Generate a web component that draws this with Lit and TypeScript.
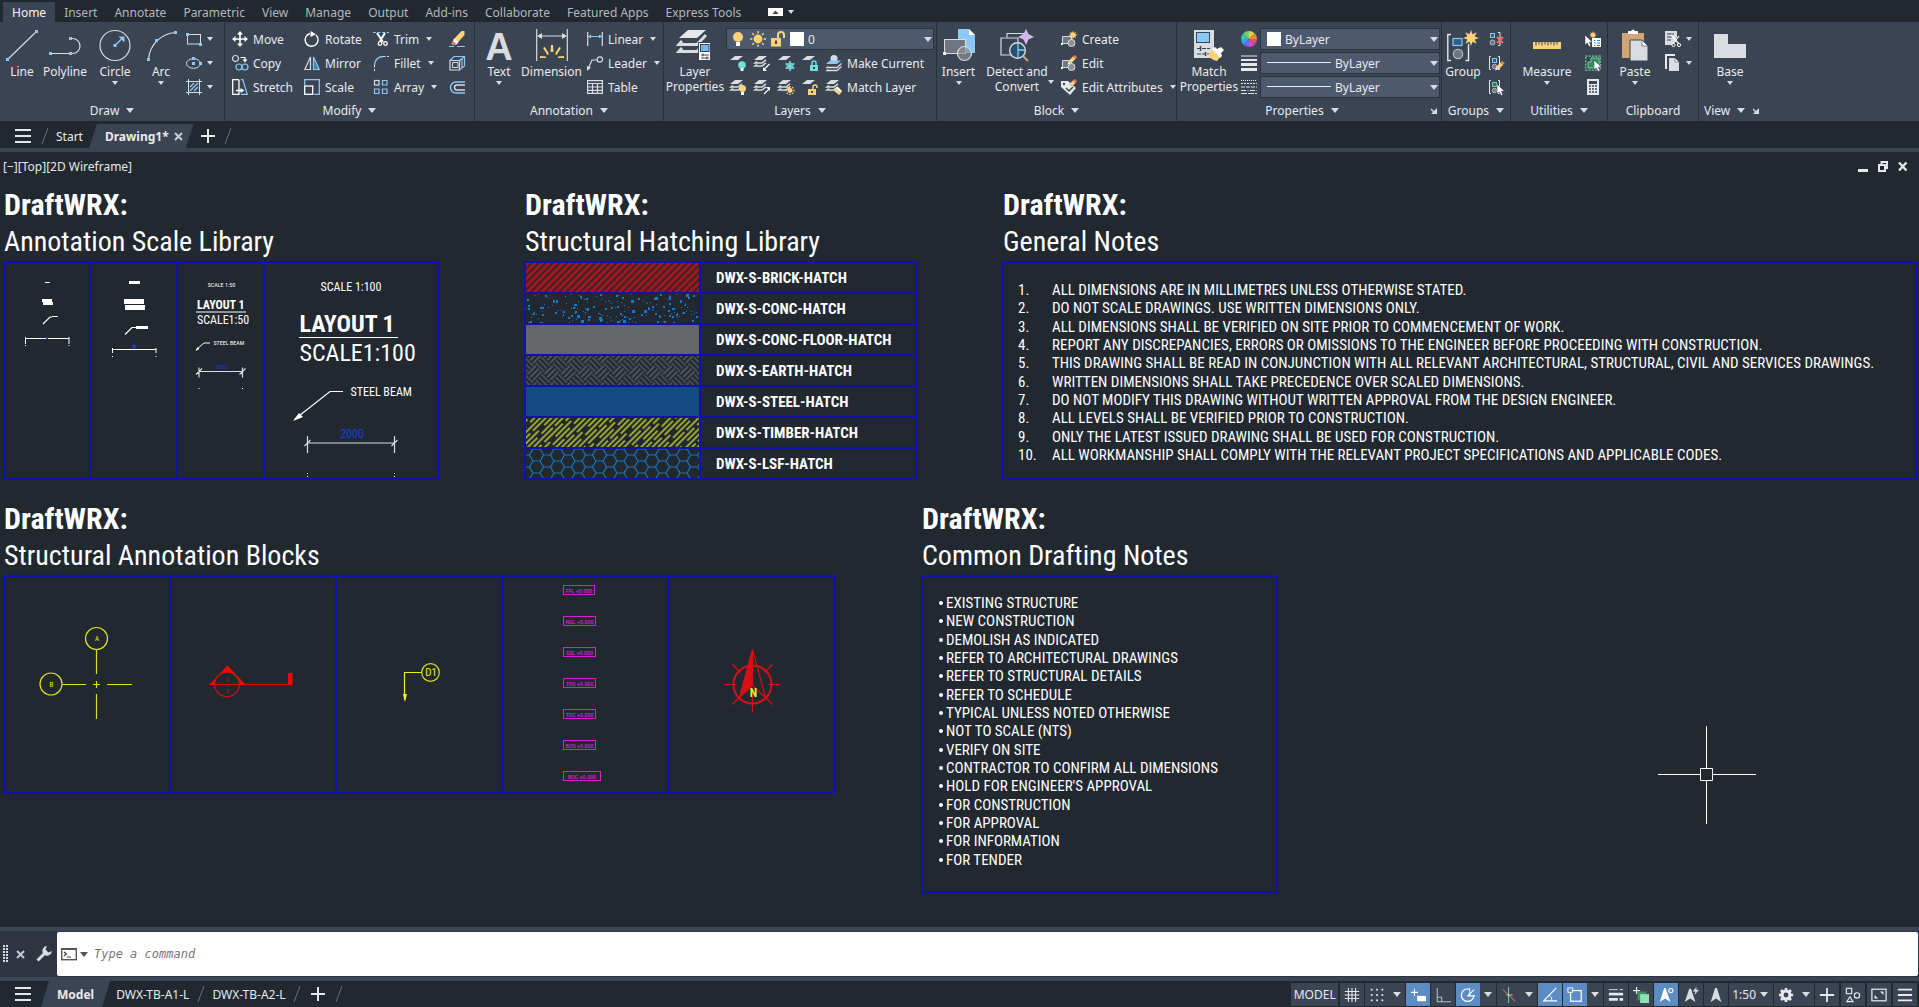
import { LitElement, html, svg, css, nothing, TemplateResult, SVGTemplateResult } from "lit";
import { customElement } from "lit/decorators.js";
import { classMap } from "lit/directives/class-map.js";

type Art = SVGTemplateResult;

const icon = (art: Art, w = 16, h = w, show = w) =>
  html`<svg class="ico" width=${show} height=${show === w ? h : show} viewBox="0 0 ${w} ${h}" aria-hidden="true">${art}</svg>`;

const caret = (wide = false) =>
  wide
    ? html`<svg class="ico" width="8" height="5" viewBox="0 0 8 5" aria-hidden="true"><path d="M0 0h8L4 5z" fill="#d9dce0" /></svg>`
    : html`<svg class="ico" width="6" height="4" viewBox="0 0 6 4" aria-hidden="true"><path d="M0 0h6L3 4z" fill="#d9dce0" /></svg>`;

const dot = (x: number, y: number) => svg`<rect x=${x - 1.5} y=${y - 1.5} width="3" height="3" fill="#8cc8f5" />`;
const cursor = (x: number, y: number) =>
  svg`<path transform="translate(${x} ${y})" d="M0 0v10l2.300-2 1.700 3.500 2-1-1.700-3.300H7.500z" fill="#fff" stroke="#3b4453" stroke-width=".6" />`;
const star = (x: number, y: number, r: number) => {
  const pts: string[] = [];
  for (let i = 0; i < 16; i++) {
    const q = i % 2 ? r * 0.5 : r;
    const a = (i * Math.PI) / 8;
    pts.push(`${(x + q * Math.sin(a)).toFixed(1)},${(y - q * Math.cos(a)).toFixed(1)}`);
  }
  return svg`<polygon points=${pts.join(" ")} fill="#fbd27a" />`;
};
const sun = (x: number, y: number, r: number) => svg`
  <circle cx=${x} cy=${y} r=${r * 0.55} fill="#fbd27a" />
  <g stroke="#fbd27a" stroke-width="1.4">
    ${[0, 45, 90, 135].map((a) => svg`<path d="M${x} ${y - r}V${y - r * 0.7}M${x} ${y + r}V${y + r * 0.7}" transform="rotate(${a} ${x} ${y})" />`)}
  </g>`;
const pencil = (x: number, y: number) => svg`
  <g transform="translate(${x} ${y}) rotate(45)">
    <rect x="-1.800" y="0" width="3.600" height="2.500" fill="#f0706a" />
    <rect x="-1.800" y="2.500" width="3.600" height="6" fill="#fbd27a" />
    <path d="M-1.800 8.500h3.600L0 12z" fill="#e6e8eb" />
  </g>`;
const sheet = (y: number, fill = "#d9dce0") => svg`<path d="M5 ${y}h8l-5 4H0z" fill=${fill} />`;
const sheets = svg`${sheet(1)}<path d="M3 6.500L1 8h7l4-3.200M3 9.500L1 11h7l4-3.200" stroke="#d9dce0" stroke-width="1.500" fill="none" />`;
const lock = (x: number, y: number, fill: string, open: boolean) => svg`
  <rect x=${x} y=${y} width="8" height="6" fill=${fill} />
  <path d=${open ? `M${x + 5} ${y}v-2a2 2 0 0 1 4 0v1` : `M${x + 2} ${y}v-2a2 2 0 0 1 4 0v2`} stroke=${fill} stroke-width="1.500" fill="none" />
  <rect x=${x + 3} y=${y + 2} width="2" height="2" fill="#3b4453" />`;
const blockBase = svg`
  <path d="M1.500 5.500h9v7h-9z" fill="#6f7681" stroke="#d9dce0" />
  <circle cx="10.500" cy="12" r="3.500" fill="#8b9099" stroke="#d9dce0" />
  <rect x="0" y="12" width="2" height="2" fill="#fff" />`;
const groupBits = (stroke: string, fill: string) => svg`
  <path d="M3 1.500H1.500v13H3M10 1.500h1.500v13H10" stroke="#e6e8eb" fill="none" />
  <rect x="4.500" y="3.500" width="4" height="4" stroke=${stroke} fill=${fill} />
  <circle cx="6.500" cy="11.500" r="2.200" stroke="#b8bcc2" fill="#6f7681" />`;

const A: Record<string, Art> = {
  line: svg`<path d="M1.500 30.500l29-28" stroke="#d9dce0" stroke-width="1.200" />${dot(1.5, 30.5)}${dot(30.5, 2.5)}`,
  polyline: svg`<path d="M1.500 24.500h22a7.500 7.500 0 0 0 0-15h-2" stroke="#d9dce0" stroke-width="1.200" fill="none" />${dot(1.5, 24.5)}${dot(21.5, 24.5)}${dot(21.5, 9.5)}`,
  circle: svg`<circle cx="16" cy="16.500" r="15" stroke="#d9dce0" stroke-width="1.200" fill="none" /><path d="M16 16.500l8-8" stroke="#8cc8f5" stroke-width="1.500" /><path d="M25.500 7.500v6l-6-6z" fill="#8cc8f5" />${dot(16, 16.5)}`,
  arc: svg`<path d="M3.500 30.500A29 29 0 0 1 30.500 3.500" stroke="#d9dce0" stroke-width="1.200" fill="none" />${dot(3.5, 30.5)}${dot(11.5, 11.5)}${dot(30.5, 3.5)}`,
  rect: svg`<rect x="1.500" y="3.500" width="13" height="9.500" stroke="#d9dce0" fill="none" /><rect x="0" y="2" width="3" height="3" fill="#8cc8f5" /><rect x="13" y="12" width="3" height="3" fill="#8cc8f5" />`,
  ellipse: svg`<ellipse cx="7.500" cy="8.500" rx="7" ry="4.800" stroke="#d9dce0" fill="none" /><rect x="6" y="7" width="3" height="3" fill="#8cc8f5" /><rect x="6" y="2" width="3" height="3" fill="#8cc8f5" /><rect x="13" y="7" width="3" height="3" fill="#8cc8f5" />`,
  hatch: svg`<path d="M2.500 0v16M13.500 0v16M0 2.500h16M0 13.500h16" stroke="#d9dce0" /><path d="M4 8l4-4M4 12l8-8M8 12l4-4" stroke="#8cc8f5" stroke-width="1.400" />`,
  move: svg`<path d="M8 2v12M2 8h12" stroke="#fff" stroke-width="1.600" /><path d="M8 0l3 3.500H5zM8 16l3-3.500H5zM0 8l3.500-3v6zM16 8l-3.500-3v6z" fill="#fff" />`,
  rotate: svg`<path d="M6 2.500a6.500 6.500 0 1 0 6 1.500" stroke="#fff" stroke-width="1.400" fill="none" /><path d="M6.500 0L12 3.200 6.500 6z" fill="#fff" />`,
  trim: svg`<path d="M0 1.500h16" stroke="#8cc8f5" stroke-dasharray="3 1.500" /><path d="M4 2l6 9M12 2L7 10" stroke="#fff" stroke-width="2" /><circle cx="7" cy="12.500" r="1.800" stroke="#fff" fill="none" stroke-width="1.300" /><circle cx="12.500" cy="12.500" r="1.800" stroke="#fff" fill="none" stroke-width="1.300" />`,
  erase: svg`<path d="M0 15.500h5M8 15.500h8" stroke="#8cc8f5" /><path d="M12.500 0h3v4l-7.500 8.500-4-3.500z" fill="#fbd27a" /><path d="M5.500 7.500l4 3.500-2 2.500q-3 1.500-5-1z" fill="#fff" /><path d="M4 10l3.500 3q-2 2-4.500.5-1-2 1-3.500z" fill="#f0706a" />`,
  copy: svg`<circle cx="3.500" cy="3.500" r="3" stroke="#d9dce0" stroke-width="1.200" fill="none" /><path d="M8.500 2.500h4.500v3" stroke="#fff" stroke-width="1.200" fill="none" /><path d="M10.500 4.500h5L13 7.500z" fill="#fff" /><circle cx="7" cy="12" r="3" stroke="#8cc8f5" stroke-width="1.200" fill="none" /><circle cx="13" cy="12" r="3" stroke="#8cc8f5" stroke-width="1.200" fill="none" />`,
  mirror: svg`<path d="M6.500 2v12.500H.8z" stroke="#d9dce0" stroke-width="1.200" fill="none" /><path d="M9.500 2v12.500h5.700z" fill="#3f7fb0" stroke="#8cc8f5" stroke-width="1.200" />`,
  fillet: svg`<path d="M1.500 10V16M10 1.500h6" stroke="#d9dce0" stroke-dasharray="2.500 1.500" /><path d="M1.500 10A8.500 8.500 0 0 1 10 1.500" stroke="#8cc8f5" stroke-width="1.400" fill="none" />`,
  box: svg`<path d="M1 5.500h9.500V15H1z" stroke="#d9dce0" fill="none" stroke-width="1.200" /><path d="M3.500 7.500H9v5H3.500z" stroke="#d9dce0" fill="none" /><path d="M1 5.500l4-4h10.500v9.500l-5 4M10.500 5.500l5-4M13 4v9" stroke="#8cc8f5" fill="none" stroke-width="1.200" />`,
  stretch: svg`<path d="M7 .7H.7v14.600H7V.7M4 11.500h6" stroke="#fff" stroke-width="1.300" fill="none" /><path d="M8.500 9l4 2.500-4 2.500z" fill="#fff" /><path d="M9 .7h1.800l4.500 14.600H9" stroke="#8cc8f5" stroke-width="1.200" fill="none" />`,
  scale: svg`<path d="M.7 6V.7h14.600v14.600H10" stroke="#8cc8f5" stroke-width="1.300" fill="none" /><rect x=".7" y="7" width="8" height="8.300" stroke="#fff" stroke-width="1.300" fill="none" />`,
  array: svg`<rect x="1.500" y="1.500" width="4.500" height="4.500" stroke="#d9dce0" fill="none" stroke-width="1.200" /><path d="M9.500 1.500H14V6H9.500zM1.500 10H6v4.500H1.500zM9.500 10H14v4.500H9.500z" stroke="#8cc8f5" fill="none" stroke-width="1.200" />`,
  offset: svg`<path d="M16 3H7a5 5 0 0 0 0 11h9" stroke="#8cc8f5" stroke-width="1.400" fill="none" /><path d="M16 6H8a2.500 2.500 0 0 0 0 5h8" stroke="#d9dce0" stroke-width="1.400" fill="none" />`,
  text: svg`<text x="16" y="31" text-anchor="middle" class="glyph">A</text>`,
  dimension: svg`<path d="M.7 0v32M31.300 0v32" stroke="#d9dce0" stroke-width="1.200" /><path d="M3 7h26" stroke="#d9dce0" /><path d="M1 7l5-3v6zM31 7l-5-3v6z" fill="#d9dce0" /><path d="M15 16h2l.5 7h-3zM7 19l2-1 4 7-1.500 1zM25 19l-2-1-4 7 1.500 1zM4 29v-2l6 .5V29zM28 29v-2l-6 .5V29z" fill="#fbd27a" />`,
  linear: svg`<path d="M.7 1v14M15.300 1v14" stroke="#d9dce0" stroke-width="1.200" /><path d="M1 5.500h14" stroke="#8cc8f5" /><path d="M1 5.500l3-2v4zM15 5.500l-3-2v4z" fill="#8cc8f5" />`,
  leader: svg`<path d="M1.500 13L5 5h5" stroke="#d9dce0" stroke-width="1.200" fill="none" /><circle cx="12.800" cy="4.500" r="2.700" stroke="#d9dce0" stroke-width="1.200" fill="none" /><path d="M0 16v-5l4 1.500z" fill="#d9dce0" />`,
  table: svg`<path d="M.6 1.600h14.800v12.800H.6zM.6 4.500h14.800M.6 8h14.800M.6 11.300h14.800M5.500 4.500v10M10.500 4.500v10" stroke="#d9dce0" stroke-width="1.200" fill="none" />`,
  layerProps: svg`<path d="M9 1h18L18 9H0z" fill="#e6e8eb" /><path d="M3 12l-3 3.500h18l9-9.500M3 19l-3 3.500h18l5-5.500" stroke="#d9dce0" stroke-width="3" fill="none" /><rect x="19.500" y="13.500" width="12" height="18" fill="#fff" stroke="#3b4453" /><rect x="21.500" y="15.500" width="8.500" height="7" fill="#6db9f0" stroke="#3b4453" /><path d="M22 26h8M22 29h8M24 24.500v3M28 27.500v3" stroke="#3b4453" />`,
  layOff: svg`${sheet(1)}<circle cx="12" cy="10" r="3.800" fill="#6fe0dc" /><rect x="10.500" y="13" width="3" height="3" fill="#fff" />`,
  layIso: svg`${sheets}<path d="M15.500 9l-5 5" stroke="#fff" stroke-width="1.200" /><path d="M9 16v-4l4 4z" fill="#fff" />`,
  layFreeze: svg`${sheet(1)}<path d="M12 6v10M7.700 8.500l8.600 5M7.700 13.500l8.600-5" stroke="#6fe0dc" stroke-width="1.500" /><circle cx="12" cy="11" r="3" stroke="#6fe0dc" fill="none" />`,
  layLock: svg`${sheet(1)}${lock(8, 10, "#6fe0dc", false)}`,
  makeCurrent: svg`<circle cx="8" cy="3.500" r="3.500" fill="#d9dce0" /><path d="M4 5.500L0 9h11l4-3.500z" fill="#8cc8f5" /><path d="M2 11.500l-1 1h10l4.500-4M2 14.500l-1 1h10l4.500-4" stroke="#d9dce0" stroke-width="1.300" fill="none" />`,
  layOn: svg`${sheets}<circle cx="12.500" cy="9.500" r="3.500" fill="#fbd27a" /><rect x="11" y="13" width="3" height="3" fill="#fff" />`,
  layUniso: svg`${sheets}<path d="M10 15l5-5" stroke="#fff" stroke-width="1.200" /><path d="M16 8v4l-4-4z" fill="#fff" />`,
  layThaw: svg`${sheets}${sun(12, 11.5, 4.5)}`,
  layUnlock: svg`${sheet(1)}${lock(6, 10, "#fbd27a", true)}`,
  matchLayer: svg`${sheets}<path d="M9 9l6 5-2 2-6-5z" fill="#fbd27a" /><path d="M9 9l3-1 4 4-1 2z" fill="#fff" />`,
  bulb: svg`<circle cx="8" cy="6" r="5" fill="#fbd27a" /><rect x="6" y="11" width="4" height="4" fill="#fff" />`,
  sun: sun(8, 8, 8),
  unlock: svg`<rect x="1" y="7" width="10" height="8.500" fill="#fbd27a" /><path d="M8 7V4a3 3 0 0 1 6 0v3" stroke="#fbd27a" stroke-width="2" fill="none" /><rect x="5" y="9.500" width="2" height="3.500" fill="#3b4453" />`,
  insert: svg`<path d="M15 0h11l6 6v18H15z" fill="#8cc8f5" /><path d="M26 0v6h6z" fill="#fff" /><rect x="1.500" y="10.500" width="21" height="14" fill="#6f7681" stroke="#d9dce0" /><circle cx="21.500" cy="24.500" r="7" fill="#8b9099" fill-opacity=".7" stroke="#d9dce0" stroke-width="1.200" /><rect x="0" y="23" width="3" height="3" fill="#fff" />`,
  detect: svg`<path d="M7 8.500V4.500h19v8" stroke="#d9dce0" fill="none" stroke-width="1.200" /><path d="M17 26H1V9h17v6" stroke="#d9dce0" fill="none" stroke-width="1.200" /><path d="M26 0l2.500 5L34 8l-5.500 2.500L26 16l-2.500-5.500L18 8l5.500-3z" fill="#d3b8f0" /><circle cx="17.500" cy="21.500" r="7.800" fill="#25506f" stroke="#d9dce0" stroke-width="1.400" /><path d="M18 14v15M18 21h7" stroke="#8cc8f5" stroke-width="1.300" /><path d="M23 27l5 5" stroke="#c9a477" stroke-width="2" />`,
  create: svg`${blockBase}${star(12, 4, 4.5)}`,
  edit: svg`${blockBase}${pencil(15, 1)}`,
  attrs: svg`<path d="M0 2h7l8 7-6 7-9-8z" fill="#e6e8eb" /><circle cx="3" cy="5" r="1.200" fill="#3b4453" /><path d="M5 9l3 3 4-4" stroke="#3b4453" stroke-width="1.500" fill="none" />${pencil(15, 1)}`,
  matchProps: svg`<rect x="1" y="1" width="20" height="28" fill="#d9dce0" /><rect x="3.500" y="3.500" width="13" height="10" fill="#8cc8f5" stroke="#3b4453" /><path d="M4 19.500h13M4 25h13" stroke="#3b4453" stroke-dasharray="4 1" /><path d="M7.500 17v5M12.500 23v4" stroke="#3b4453" stroke-width="1.500" /><path d="M19 21l9 6-4 5q-6-1-9-6z" fill="#fbd27a" /><path d="M19 20l3-2 2 2 4-2 3 3-3 3 1 3-2 2z" fill="#fff" />`,
  wheel: svg`${["#f7c948", "#f08a3c", "#e8505b", "#c850c0", "#7a5cf0", "#3aa0f0", "#38c8a8", "#7ad070"].map(
    (c, i) => svg`<path d="M8 8L8 0A8 8 0 0 1 13.660 2.340z" fill=${c} transform="rotate(${i * 45} 8 8)" />`
  )}`,
  weights: svg`<path d="M0 1h16" stroke="#e6e8eb" stroke-width="1" /><path d="M0 5h16" stroke="#e6e8eb" stroke-width="2" /><path d="M0 9.500h16" stroke="#e6e8eb" stroke-width="3" /><path d="M0 14.500h16" stroke="#e6e8eb" stroke-width="3" />`,
  types: svg`<path d="M0 1.500h16" stroke="#e6e8eb" stroke-dasharray="1 1" /><path d="M0 4.500h16" stroke="#e6e8eb" stroke-dasharray="2 1" /><path d="M0 8h16" stroke="#e6e8eb" stroke-dasharray="4 1" /><path d="M0 11.500h16" stroke="#e6e8eb" stroke-dasharray="5 1.500 1 1.500" /><path d="M0 14.500h16" stroke="#e6e8eb" stroke-dasharray="6 1" />`,
  group: svg`<path d="M4 5.500H.8v26H4M18 12v19.500h3.500V15M18 5.500h-3" stroke="#e6e8eb" stroke-width="0" fill="none" /><path d="M4 5.500H.8v26H4M18.500 31.500h3V15" stroke="#e6e8eb" stroke-width="1.400" fill="none" /><rect x="6" y="9.500" width="9" height="7" stroke="#8cc8f5" fill="#2f5f88" stroke-width="1.200" /><circle cx="11" cy="25" r="4.700" stroke="#b8bcc2" fill="#6f7681" stroke-width="1.200" />${star(24, 9, 8)}`,
  ungroup: svg`<path d="M10 1.500h2v13h-2" stroke="#e6e8eb" fill="none" /><rect x="2.500" y="2.500" width="4" height="4" stroke="#8cc8f5" fill="#2f5f88" /><circle cx="4.500" cy="11.500" r="2.500" stroke="#b8bcc2" fill="#6f7681" /><path d="M9 6l6 6M15 6l-6 6" stroke="#f0706a" stroke-width="2" />`,
  groupEdit: svg`${groupBits("#8cc8f5", "#2f5f88")}${pencil(15.5, 7)}`,
  groupSel: svg`${groupBits("#6fd09a", "#2b7a50")}${cursor(9, 5)}`,
  measure: svg`<path d="M2 13h28v7H2z" fill="#fbd27a" /><path d="M5 13v3.500M8 13v2.500M11 13v3.500M14 13v2.500M17 13v3.500M20 13v2.500M23 13v3.500M26 13v2.500" stroke="#3b4453" />`,
  quickSel: svg`${star(8, 4, 4)}${cursor(0, 4)}<rect x="7" y="7" width="9" height="9" fill="#fff" /><path d="M9 9.500h1.500M9 12h1.500M9 14.500h1.500M12 9.500h3M12 12h3M12 14.500h3" stroke="#3f7fb0" />`,
  selSimilar: svg`<rect x=".7" y="1.200" width="14.600" height="14" stroke="#6fd09a" fill="none" stroke-dasharray="2 1.200" stroke-width="1.200" /><path d="M6 3h8v7H9v3H3V7h3z" fill="#2f8f62" stroke="#6fd09a" />${cursor(9, 5)}`,
  calc: svg`<rect x="2" y="0" width="12" height="16" fill="#e6e8eb" /><rect x="4" y="2" width="8" height="3" fill="#3b4453" />${[7, 10, 13].map((y) => svg`<path d="M4 ${y}h2M7 ${y}h2M10 ${y}h2" stroke="#3b4453" stroke-width="1.600" />`)}`,
  paste: svg`<path d="M3 4h22v25H3z" fill="#d4a574" /><path d="M9 5V2h3q2-3 4 0h3v3z" fill="#fff" /><path d="M11 11h12l6 6v15H11z" fill="#d9dce0" stroke="#3b4453" /><path d="M23 11v6h6z" fill="#fff" stroke="#3b4453" stroke-width=".6" />`,
  cut: svg`<path d="M0 0h12v6l-4 8H0z" fill="#d9dce0" /><path d="M2 3h7M2 6h5M2 9h4" stroke="#3b4453" /><path d="M6 4l8 9M14 5l-6 8" stroke="#fff" stroke-width="1.200" /><circle cx="8.500" cy="14" r="1.600" stroke="#fff" fill="#3b4453" /><circle cx="14" cy="14" r="1.600" stroke="#fff" fill="#3b4453" />`,
  copyClip: svg`<path d="M1 14V0h9" stroke="#e6e8eb" stroke-width="2" fill="none" /><path d="M4 3h6l4 4v9H4z" fill="#d9dce0" /><path d="M10 3v4h4z" fill="#fff" stroke="#3b4453" stroke-width=".5" />`,
  base: svg`<path d="M0 5h14v10h18v14H0z" fill="#d9dce0" />`,
  menu: svg`<path d="M0 2h16M0 8h16M0 14h16" stroke="#e6e8eb" stroke-width="2" />`,
  plus: svg`<path d="M7 0v14M0 7h14" stroke="#e6e8eb" stroke-width="2" />`,
  cross: svg`<path d="M1 1l7 7M8 1L1 8" stroke="#c8ccd2" stroke-width="2" />`,
  slash: svg`<path d="M1 16L7 0" stroke="#6a717c" />`,
  launch: svg`<path d="M0 1l4 4" stroke="#d9dce0" stroke-width="1.200" /><path d="M6 0v6H0z" fill="#d9dce0" />`,
  console: svg`<rect x=".7" y="1.700" width="14.600" height="11" fill="#fff" stroke="#555" stroke-width="1.400" /><path d="M0 2h16" stroke="#555" stroke-width="2" /><path d="M3 5l2.500 2L3 9M6 10h4" stroke="#333" stroke-width="1.200" fill="none" />`,
  wrench: svg`<path d="M1.500 14.500L9 7" stroke="#d9dce0" stroke-width="3" /><path d="M11 0L9.500 3.500l3 3L16 5a5 5 0 0 1-6.500 4.500L6.500 6.500A5 5 0 0 1 11 0z" fill="#d9dce0" />`,
};

/* Status bar glyphs, 18 x 18 */
const S: Record<string, Art> = {
  grid: svg`<path d="M5 1v16M9 1v16M13 1v16M1 5h16M1 9h16M1 13h16" stroke="#e6e8eb" stroke-width="1.200" />`,
  snap: svg`${[3, 9, 15].map((y) => [3, 9, 15].map((x) => svg`<rect x=${x - 1} y=${y - 1} width="2" height="2" fill="#e6e8eb" />`))}`,
  dyn: svg`<path d="M5 2v8M1 6h8" stroke="#fff" stroke-width="1.300" /><rect x="8" y="10" width="10" height="6" fill="#fff" />`,
  ortho: svg`<path d="M2.500 1v15.500H18M2.500 11.500h5v5" stroke="#b8bcc2" stroke-width="1.200" fill="none" />`,
  polar: svg`<path d="M15.500 10a7 7 0 1 1-5-7.500M8.500 10L16 3M8.500 10H17" stroke="#fff" stroke-width="1.300" fill="none" /><path d="M11 1v9" stroke="#fff" />`,
  iso: svg`<path d="M2 3l14 13" stroke="#e0565b" stroke-width="1.300" /><path d="M8.500 0v18" stroke="#6fd09a" stroke-width="1.200" /><path d="M6 9h7" stroke="#d9dce0" />`,
  track: svg`<path d="M16 1L2 15.500h15" stroke="#fff" stroke-width="1.400" fill="none" /><path d="M8 9a6 6 0 0 1 3 6" stroke="#fff" fill="none" />`,
  osnap: svg`<rect x="4" y="4" width="12" height="12" stroke="#fff" stroke-width="1.400" fill="none" /><rect x="1" y="1" width="5" height="5" stroke="#fff" fill="#5b8cc4" />`,
  weight: svg`<path d="M1 3h10M13 3h4" stroke="#e6e8eb" /><path d="M1 8h16" stroke="#e6e8eb" stroke-width="3" /><path d="M1 14h10M13 14h4" stroke="#e6e8eb" stroke-width="3" />`,
  transp: svg`<path d="M4 0v8M0 4h8" stroke="#e6e8eb" stroke-width="1.300" /><path d="M5 5h10v10H5z" fill="#3c9068" /><path d="M8 8h10v10H8z" fill="#8fe0b4" />`,
  annoA: svg`<path d="M7 1l1.500 0L14 17l-6-4-6 4z" fill="#fff" /><circle cx="14.500" cy="4" r="2.300" stroke="#fff" fill="none" stroke-width="1.200" />`,
  annoB: svg`<path d="M7 2h2l5 15-6-4-6 4z" fill="#d9dce0" /><path d="M15 0l-4 5h3l-1 4 5-6h-3z" fill="#d9dce0" />`,
  annoC: svg`<path d="M8 1h2l5 16-6-4-6 4z" fill="#d9dce0" />`,
  gear: svg`<circle cx="9" cy="9" r="4.500" stroke="#e6e8eb" stroke-width="3.500" fill="none" />${[0, 45, 90, 135].map((a) => svg`<path d="M9 1v3M9 14v3" stroke="#e6e8eb" stroke-width="3" transform="rotate(${a} 9 9)" />`)}`,
  plus: svg`<path d="M9 1v16M1 9h16" stroke="#e6e8eb" stroke-width="2" />`,
  shapes: svg`<rect x="1.500" y="1.500" width="6" height="6" stroke="#e6e8eb" fill="none" stroke-width="1.300" /><circle cx="13.500" cy="9.500" r="3" stroke="#e6e8eb" fill="none" stroke-width="1.300" /><path d="M5.500 11l3.500 5.500H2z" stroke="#e6e8eb" fill="none" stroke-width="1.300" />`,
  expand: svg`<rect x="1" y="2.500" width="16" height="13" stroke="#e6e8eb" fill="none" stroke-width="1.400" /><path d="M14 5v4l-4-4zM4 13V9l4 4z" fill="#e6e8eb" />`,
  menu: svg`<path d="M1 3h16M1 9h16M1 15h16" stroke="#e6e8eb" stroke-width="2" />`,
};

const big = (name: string, label: string[], drop = false, size = 32, side = false) => html`
  <button class=${classMap({ big: true, side })}>
    ${icon(A[name], size, 33)}
    <span>${label.map((l, i) => (i ? html`<br />${l}` : l))}</span>
    ${drop ? caret() : nothing}
  </button>`;

const small = (name: string, label = "", drop = false, title = label) => html`
  <button class="small" aria-label=${title || name}>
    ${icon(A[name])}${label ? html`<span>${label}</span>` : nothing}${drop ? html`<i class="drop">${caret()}</i>` : nothing}
  </button>`;

const panel = (cls: string, title: string, body: TemplateResult, opts: { arrow?: boolean; launch?: boolean } = { arrow: true }) => html`
  <section class="panel ${cls}">
    <div class="body">${body}</div>
    <footer>
      <button class="ptitle">${title}${opts.arrow ? caret(true) : nothing}</button>
      ${opts.launch ? html`<button class="launch" aria-label="${title} settings">${icon(A.launch, 6)}</button>` : nothing}
    </footer>
  </section>`;

const TABS = ["Home", "Insert", "Annotate", "Parametric", "View", "Manage", "Output", "Add-ins", "Collaborate", "Featured Apps", "Express Tools"];

@customElement("cad-ribbon")
class CadRibbon extends LitElement {
  static styles = css`
    :host { display: block; color: #e9ebee; font: 12px/15px "Noto Sans", "Open Sans", sans-serif; }
    button, select { font: inherit; color: inherit; background: none; border: 0; padding: 0; margin: 0; }
    .ico { display: block; flex: none; overflow: visible; }
    .tabs { display: flex; height: 22px; background: #212830; padding: 2px 0 0 3px; box-sizing: border-box; }
    .tabs button { padding: 0 8px; color: #b4b8be; margin-right: 1px; }
    .tabs .on { background: #3b4453; color: #f2f3f5; padding: 0 9px; }
    .tabs .min { display: flex; align-items: center; gap: 5px; padding: 0 18px; }
    .ribbon { display: flex; height: 99px; background: #3b4453; }
    .panel { display: flex; flex-direction: column; box-sizing: border-box; border-right: 1px solid #29303b; flex: none; }
    .body { display: flex; height: 72px; padding-top: 5px; }
    footer { display: flex; justify-content: center; align-items: center; height: 22px; padding-top: 1px; box-sizing: border-box; }
    .ptitle { display: flex; align-items: center; gap: 7px; margin: 0 auto; }
    .launch { padding: 4px; }
    .big { display: flex; flex-direction: column; align-items: center; flex: none; height: 72px; padding-top: 2px; gap: 2px; }
    .big span { white-space: nowrap; text-align: center; }
    .side { position: relative; }
    .side > .ico:last-child { position: absolute; right: 0; top: 53px; }
    .small { display: flex; align-items: center; gap: 5px; height: 24px; white-space: nowrap; }
    .drop { display: block; padding-left: 2px; }
    .col { display: flex; flex-direction: column; align-items: flex-start; }
    .glyph { font: bold 38px "Liberation Sans", sans-serif; fill: #d9dce0; }
    .draw { width: 225px; }
    .draw .big:nth-child(1) { width: 44px; } .draw .big:nth-child(2) { width: 42px; }
    .draw .big:nth-child(3) { width: 58px; } .draw .big:nth-child(4) { width: 34px; }
    .draw .col { padding-left: 8px; }
    .draw .drop { padding-left: 0; }
    .modify { width: 250px; }
    .grid { display: grid; grid-template-columns: 72px 69px 76px 18px; grid-auto-rows: 24px; padding-left: 7px; }
    .anno { width: 189px; }
    .anno .big { width: 57px; } .anno .big:first-child { width: 48px; } .anno .col { padding-left: 7px; }
    .layers { width: 273px; } .layers .big { width: 62px; }
    .layers .stack { display: flex; flex-direction: column; }
    .lrow { display: flex; gap: 8px; padding-left: 4px; }
    .combo { display: flex; align-items: center; gap: 4px; height: 22px; margin: 1px 0; padding: 0 5px; background: #4d596d; border: 1px solid #2c3440; box-sizing: border-box; }
    .combo select { appearance: none; flex: 1; min-width: 0; outline: none; }
    .layers .combo { width: 208px; padding: 0 1px 0 3px; }
    .swatch { width: 14px; height: 14px; background: #fff; }
    .block { width: 240px; }
    .block .big { width: 43px; } .block .side { width: 74px; } .block .col { padding-left: 7px; }
    .props { width: 265px; } .props .big { width: 64px; }
    .props .combo { width: 180px; padding: 0 1px 0 6px; }
    .props .row { display: flex; align-items: center; gap: 3px; height: 24px; }
    .groups { width: 69px; } .groups .big { width: 42px; } .groups .col { padding-left: 4px; }
    .utils { width: 97px; } .utils .big { width: 72px; } .utils .col { padding-left: 2px; }
    .clip { width: 91px; } .clip .big { width: 54px; } .clip .col { padding-left: 3px; }
    .clip .drop { padding-left: 0; }
    .view { flex: 1; border-right: 0; } .view .big { width: 62px; }
    .view footer { justify-content: flex-start; padding-left: 5px; gap: 4px; }
    .view .ptitle { margin: 0; }
  `;

  private prop(art: string, label: string, swatch: boolean) {
    return html`<div class="row">
      ${icon(A[art])}
      <div class="combo">
        ${swatch ? html`<span class="swatch"></span>` : html`<svg class="ico" width="64" height="2" viewBox="0 0 64 2" aria-hidden="true"><path d="M0 .5h64" stroke="#e9ebee" /></svg>`}
        <select aria-label=${label}><option>ByLayer</option></select>${caret(true)}
      </div>
    </div>`;
  }

  render() {
    return html`
      <nav class="tabs">
        ${TABS.map((t, i) => html`<button class=${i ? "" : "on"}>${t}</button>`)}
        <button class="min" aria-label="Minimize ribbon">
          <svg class="ico" width="15" height="8" viewBox="0 0 15 8" aria-hidden="true"><path d="M0 0h15v8H0z" fill="#fff" /><path d="M7.500 2.500L10.500 6h-6z" fill="#444" /></svg>${caret()}
        </button>
      </nav>
      <div class="ribbon">
        ${panel("draw", "Draw", html`
          ${big("line", ["Line"])}${big("polyline", ["Polyline"])}${big("circle", ["Circle"], true)}${big("arc", ["Arc"], true)}
          <div class="col">${small("rect", "", true)}${small("ellipse", "", true)}${small("hatch", "", true)}</div>`)}
        ${panel("modify", "Modify", html`<div class="grid">
          ${small("move", "Move")}${small("rotate", "Rotate")}${small("trim", "Trim", true)}${small("erase")}
          ${small("copy", "Copy")}${small("mirror", "Mirror")}${small("fillet", "Fillet", true)}${small("box")}
          ${small("stretch", "Stretch")}${small("scale", "Scale")}${small("array", "Array", true)}${small("offset")}
        </div>`)}
        ${panel("anno", "Annotation", html`
          ${big("text", ["Text"], true)}${big("dimension", ["Dimension"])}
          <div class="col">${small("linear", "Linear", true)}${small("leader", "Leader", true)}${small("table", "Table")}</div>`)}
        ${panel("layers", "Layers", html`
          ${big("layerProps", ["Layer", "Properties"])}
          <div class="stack">
            <div class="combo">
              ${icon(A.bulb)}${icon(A.sun)}${icon(A.unlock)}<span class="swatch"></span>
              <select aria-label="Layer"><option>0</option></select>${caret(true)}
            </div>
            <div class="lrow">${small("layOff")}${small("layIso")}${small("layFreeze")}${small("layLock")}${small("makeCurrent", "Make Current")}</div>
            <div class="lrow">${small("layOn")}${small("layUniso")}${small("layThaw")}${small("layUnlock")}${small("matchLayer", "Match Layer")}</div>
          </div>`)}
        ${panel("block", "Block", html`
          ${big("insert", ["Insert"], true)}${big("detect", ["Detect and", "Convert"], true, 34, true)}
          <div class="col">${small("create", "Create")}${small("edit", "Edit")}${small("attrs", "Edit Attributes", true)}</div>`)}
        ${panel("props", "Properties", html`
          ${big("matchProps", ["Match", "Properties"])}
          <div class="col">${this.prop("wheel", "Object color", true)}${this.prop("weights", "Lineweight", false)}${this.prop("types", "Linetype", false)}</div>`,
          { arrow: true, launch: true })}
        ${panel("groups", "Groups", html`
          ${big("group", ["Group"])}
          <div class="col">${small("ungroup")}${small("groupEdit")}${small("groupSel")}</div>`)}
        ${panel("utils", "Utilities", html`
          ${big("measure", ["Measure"], true)}
          <div class="col">${small("quickSel")}${small("selSimilar")}${small("calc")}</div>`)}
        ${panel("clip", "Clipboard", html`
          ${big("paste", ["Paste"], true)}
          <div class="col">${small("cut", "", true)}${small("copyClip", "", true)}</div>`, {})}
        ${panel("view", "View", html`${big("base", ["Base"], true)}`, { arrow: true, launch: true })}
      </div>`;
  }
}

const barStyles = css`
  :host { display: block; color: #e9ebee; font: 12px/15px "Noto Sans", "Open Sans", sans-serif; }
  button { display: flex; align-items: center; font: inherit; color: inherit; background: none; border: 0; padding: 0; margin: 0; white-space: nowrap; }
  .ico { display: block; flex: none; }
  .bar { display: flex; align-items: stretch; background: #212830; }
  .menu { width: 41px; padding-left: 15px; }
  .active { background: #3b4453; font-weight: bold; clip-path: polygon(8px 0, 100% 0, calc(100% - 8px) 100%, 0 100%); }
`;

@customElement("cad-file-tabs")
class CadFileTabs extends LitElement {
  static styles = [barStyles, css`
    .bar { height: 31px; border-bottom: 4px solid #3b4453; box-sizing: border-box; padding-top: 3px; }
    .start { padding: 0 6px 0 7px; }
    .active { display: flex; align-items: center; gap: 5px; padding: 0 11px 0 16px; }
    .add { padding: 0 9px 0 7px; }
    .sep { display: flex; align-items: center; }
  `];
  render() {
    return html`<nav class="bar">
      <button class="menu" aria-label="Menu">${icon(A.menu)}</button>
      <span class="sep">${icon(A.slash, 8, 16)}</span>
      <button class="start">Start</button>
      <span class="active"><button>Drawing1*</button><button aria-label="Close">${icon(A.cross, 9)}</button></span>
      <button class="add" aria-label="New drawing">${icon(A.plus, 14)}</button>
      <span class="sep">${icon(A.slash, 8, 16)}</span>
    </nav>`;
  }
}

const GENERAL = [
  "ALL DIMENSIONS ARE IN MILLIMETRES UNLESS OTHERWISE STATED.",
  "DO NOT SCALE DRAWINGS. USE WRITTEN DIMENSIONS ONLY.",
  "ALL DIMENSIONS SHALL BE VERIFIED ON SITE PRIOR TO COMMENCEMENT OF WORK.",
  "REPORT ANY DISCREPANCIES, ERRORS OR OMISSIONS TO THE ENGINEER BEFORE PROCEEDING WITH CONSTRUCTION.",
  "THIS DRAWING SHALL BE READ IN CONJUNCTION WITH ALL RELEVANT ARCHITECTURAL, STRUCTURAL, CIVIL AND SERVICES DRAWINGS.",
  "WRITTEN DIMENSIONS SHALL TAKE PRECEDENCE OVER SCALED DIMENSIONS.",
  "DO NOT MODIFY THIS DRAWING WITHOUT WRITTEN APPROVAL FROM THE DESIGN ENGINEER.",
  "ALL LEVELS SHALL BE VERIFIED PRIOR TO CONSTRUCTION.",
  "ONLY THE LATEST ISSUED DRAWING SHALL BE USED FOR CONSTRUCTION.",
  "ALL WORKMANSHIP SHALL COMPLY WITH THE RELEVANT PROJECT SPECIFICATIONS AND APPLICABLE CODES.",
];
const COMMON = [
  "EXISTING STRUCTURE", "NEW CONSTRUCTION", "DEMOLISH AS INDICATED", "REFER TO ARCHITECTURAL DRAWINGS",
  "REFER TO STRUCTURAL DETAILS", "REFER TO SCHEDULE", "TYPICAL UNLESS NOTED OTHERWISE", "NOT TO SCALE (NTS)",
  "VERIFY ON SITE", "CONTRACTOR TO CONFIRM ALL DIMENSIONS", "HOLD FOR ENGINEER'S APPROVAL", "FOR CONSTRUCTION",
  "FOR APPROVAL", "FOR INFORMATION", "FOR TENDER",
];
const LEVELS = ["FFL +0.000", "NGL +0.000", "SSL +0.000", "TOS +0.000", "TOC +0.000", "BOS +0.000", "BOC +0.000"];

/* Repeatable scatter for the concrete hatch */
const speckle = () => {
  let seed = 11;
  const rnd = () => (seed = (seed * 16807) % 2147483647) / 2147483647;
  const out: Art[] = [];
  for (let i = 0; i < 190; i++) {
    const size = rnd() > 0.9 ? 3 : rnd() > 0.6 ? 2 : 1;
    out.push(svg`<rect x=${Math.floor(rnd() * 172)} y=${Math.floor(rnd() * 29)} width=${size} height=${size} fill="#1878d0" />`);
  }
  return out;
};

const fillWith = (id: string, w: number, h: number, art: Art, transform = "") => svg`
  <defs><pattern id=${id} width=${w} height=${h} patternUnits="userSpaceOnUse" patternTransform=${transform}>${art}</pattern></defs>
  <rect width="100%" height="100%" fill="url(#${id})" />`;

const HATCHES: [string, Art | Art[]][] = [
  ["DWX-S-BRICK-HATCH", fillWith("brick", 5, 5, svg`<path d="M1.500 0v5" stroke="#b51418" stroke-width="2.600" /><path d="M4.200 0v5" stroke="#7a1a20" stroke-width=".5" />`, "rotate(45)")],
  ["DWX-S-CONC-HATCH", speckle()],
  ["DWX-S-CONC-FLOOR-HATCH", svg`<rect width="100%" height="100%" fill="#646669" />`],
  ["DWX-S-EARTH-HATCH", fillWith("earth", 24, 24, svg`<path d="M0 2h12M0 6h12M0 10h12M12 14h12M12 18h12M12 22h12M14 0v12M18 0v12M22 0v12M2 12v12M6 12v12M10 12v12" stroke="#6c7076" stroke-width="1.200" />`, "rotate(45)")],
  ["DWX-S-STEEL-HATCH", svg`<rect width="100%" height="100%" fill="#144b82" />`],
  ["DWX-S-TIMBER-HATCH", fillWith("timber", 16, 30, svg`<path d="M2 0v22M6 6v24M10 0v15M10 18v12M14 0v4M14 8v22" stroke="#c4cc30" stroke-width="1.500" />`, "rotate(45)")],
  ["DWX-S-LSF-HATCH", fillWith("lsf", 21, 12, svg`<path d="M0 6h3.500l3.500-6h7l3.500 6H21M3.500 6l3.500 6h7l3.500-6" stroke="#1674c0" stroke-width="1.200" fill="none" />`)],
];

@customElement("cad-drawing")
class CadDrawing extends LitElement {
  static styles = css`
    :host { display: block; position: relative; background: #212830; color: #fff; font-family: "Liberation Sans Narrow", "Roboto Condensed", "Open Sans Condensed", sans-serif; overflow: hidden; }
    h2, p, ul, ol { margin: 0; padding: 0; font-weight: normal; list-style: none; }
    .head { display: flex; justify-content: space-between; align-items: center; height: 34px; padding: 0 11px 6px 3px; box-sizing: border-box; font: 12px/15px "Noto Sans", sans-serif; color: #e6e8eb; }
    .win { display: flex; gap: 10px; }
    .head button { display: block; padding: 0; border: 0; background: none; font: inherit; color: inherit; }
    .ico { display: block; }
    .row { display: flex; align-items: flex-start; gap: 85px; padding: 0 2px 0 3px; }
    .row + .row { margin-top: 20px; }
    h2, .sub { font-size: 28px; line-height: 37px; white-space: nowrap; padding-left: 1px; }
    h2 { font-size: 30px; font-weight: bold; }
    .sub { padding-bottom: 1px; }
    .frame { border: 2px solid #1010b4; box-sizing: border-box; }
    .scales { display: grid; grid-template-columns: 84fr 87fr 87fr 174fr; width: 436px; height: 219px; }
    .blocks { display: grid; grid-template-columns: 164fr 166fr 166fr 166fr 167fr; width: 833px; height: 219px; }
    .cell { overflow: hidden; min-width: 0; display: flex; justify-content: center; align-items: flex-start; }
    .cell + .cell { border-left: 2px solid #1010b4; }
    .cell svg { display: block; flex: none; }
    .hatches { border-collapse: collapse; width: 393px; height: 219px; border: 2px solid #1010b4; }
    .hatches td { border: 2px solid #1010b4; padding: 0; height: 29px; line-height: 0; }
    .hatches td:first-child { width: 173px; }
    .hatches td:last-child { padding-left: 15px; font-size: 15px; font-weight: bold; line-height: 18px; white-space: nowrap; }
    .hatches svg { display: block; width: 100%; height: 29px; }
    .wide { flex: 1; min-width: 0; }
    .general { display: flex; flex-direction: column; justify-content: space-between; height: 219px; padding: 18px 14px 14px; font-size: 15px; line-height: 18px; white-space: nowrap; }
    .general li { display: flex; }
    .general span { width: 34px; }
    .common { display: flex; flex-direction: column; justify-content: space-between; width: 357px; height: 318px; padding: 17px 16px 22px; font-size: 15px; line-height: 18px; white-space: nowrap; }
    .common li { display: flex; align-items: center; gap: 3px; }
    .common li::before { content: ""; flex: none; width: 4px; height: 4px; border-radius: 50%; background: #fff; }
    .tiny { font-size: 6px; fill: #fff; } .mid { font-size: 12px; fill: #fff; } .tag { font-size: 11px; }
    .large { font-size: 24px; fill: #fff; } .strong { font-weight: bold; }
    .tiny.yel { font-size: 7px; }
    .lvl { font-size: 6px; fill: #f020f0; } .blue { fill: #1440d8; } .yel { fill: #e8f020; } .red { font-size: 6px; fill: #e00c0c; }
    .cross { position: absolute; left: 1658px; top: 574px; display: block; }
  `;

  private title(sub: string) {
    return html`<h2>DraftWRX:</h2><p class="sub">${sub}</p>`;
  }

  private dim(x1: number, x2: number, y: number, up: number, down: number) {
    return svg`<path d="M${x1} ${y}H${x2}M${x1} ${y - up}V${y + down}M${x2} ${y - up}V${y + down}M${x1 - 3} ${y + 3}l6-6M${x2 - 3} ${y + 3}l6-6" stroke="#d9dce0" fill="none" stroke-width="1.200" />`;
  }

  render() {
    return html`
      <div class="head">
        <span>[−][Top][2D Wireframe]</span>
        <span class="win">
          <button aria-label="Minimize"><svg class="ico" width="10" height="12" viewBox="0 0 10 12"><path d="M0 9h10v3H0z" fill="#e6e8eb" /></svg></button>
          <button aria-label="Restore"><svg class="ico" width="10" height="12" viewBox="0 0 10 12"><path d="M1 5h6v6H1zM3.500 4V2H9v6H8" stroke="#e6e8eb" stroke-width="2" fill="none" /></svg></button>
          <button aria-label="Close"><svg class="ico" width="10" height="12" viewBox="0 0 10 12"><path d="M1 2.500l7.500 8M8.500 2.500L1 10.500" stroke="#e6e8eb" stroke-width="2.400" /></svg></button>
        </span>
      </div>

      <div class="row">
        <section>
          ${this.title("Annotation Scale Library")}
          <div class="frame scales">
            <div class="cell">
              <svg width="84" height="215" viewBox="5 263 84 215" role="img" aria-label="Scale 1:10 annotation">
                <path d="M45 282.500h5" stroke="#fff" /><path d="M42 299h10v3h1v3H43v-3h-1z" fill="#fff" />
                <path d="M43 324l7-7h2M52 316.500h6" stroke="#fff" fill="none" stroke-width="1.200" />
                <path d="M25.500 338.500h43.500M25.500 337v7M69 337v7M25.500 345v1M69 345v1" stroke="#fff" fill="none" /><path d="M46 338h2" stroke="#1440d8" stroke-width="2" />
              </svg>
            </div>
            <div class="cell">
              <svg width="85" height="215" viewBox="91 263 85 215" role="img" aria-label="Scale 1:20 annotation">
                <path d="M129 281h11v3h-11zM124 299h20v5h-20zM125 305h20v5h-20zM136 326h12v3h-12z" fill="#fff" />
                <path d="M125 334.500l7-7h4" stroke="#fff" fill="none" stroke-width="1.200" />
                <path d="M112.500 349.500h43.500M112.500 348v5M156 348v5M112.500 356v1M156 356v1" stroke="#fff" fill="none" /><circle cx="134" cy="346.500" r="2" fill="#1440d8" />
              </svg>
            </div>
            <div class="cell">
              <svg width="85" height="215" viewBox="178 263 85 215" role="img" aria-label="Scale 1:50 annotation">
                <text x="221.500" y="287" class="tiny" text-anchor="middle">SCALE 1:50</text>
                <text x="197" y="309" class="mid strong">LAYOUT 1</text><path d="M196 312h50" stroke="#fff" />
                <text x="197" y="324" class="mid">SCALE1:50</text>
                <path d="M196 350l8-7h6" stroke="#fff" fill="none" /><path d="M195.500 351l2-4 2 2z" fill="#fff" />
                <text x="213.500" y="345" class="tiny">STEEL BEAM</text>
                <text x="221.500" y="369" class="tiny blue" text-anchor="middle">1000</text>
                ${this.dim(199, 242.5, 371.5, 4, 6)}<path d="M199 388v1M242.500 388v1" stroke="#fff" />
              </svg>
            </div>
            <div class="cell">
              <svg width="172" height="215" viewBox="265 263 172 215" role="img" aria-label="Scale 1:100 annotation">
                <text x="351" y="291" class="mid" text-anchor="middle">SCALE 1:100</text>
                <text x="299.500" y="332" class="large strong">LAYOUT 1</text><path d="M299 337.500h99" stroke="#fff" stroke-width="1.200" />
                <text x="299.500" y="361" class="large">SCALE1:100</text>
                <path d="M295 419l35-27.500h13" stroke="#fff" fill="none" stroke-width="1.200" /><path d="M293 421l6-8 4 4z" fill="#fff" />
                <text x="350.500" y="396" class="mid">STEEL BEAM</text>
                <text x="352" y="438" class="mid blue" text-anchor="middle">2000</text>
                ${this.dim(307.5, 394.5, 443, 7, 10)}<path d="M307.500 473v1M394.500 473v1M307.500 476v1M394.500 476v1" stroke="#fff" />
              </svg>
            </div>
          </div>
        </section>

        <section>
          ${this.title("Structural Hatching Library")}
          <table class="hatches" aria-label="Structural hatches">
            ${HATCHES.map(([name, art]) => html`<tr><td><svg viewBox="0 0 173 29" preserveAspectRatio="none" aria-hidden="true">${art}</svg></td><td>${name}</td></tr>`)}
          </table>
        </section>

        <section class="wide">
          ${this.title("General Notes")}
          <ol class="frame general">
            ${GENERAL.map((n, i) => html`<li><span>${i + 1}.</span>${n}</li>`)}
          </ol>
        </section>
      </div>

      <div class="row">
        <section>
          ${this.title("Structural Annotation Blocks")}
          <div class="frame blocks">
            <div class="cell">
              <svg width="164" height="215" viewBox="5 577 164 215" role="img" aria-label="Grid bubbles">
                <g stroke="#dce020" fill="none" stroke-width="1.200"><circle cx="96.500" cy="638.500" r="11" /><circle cx="51" cy="684" r="11" />
                <path d="M96.500 650v24M96.500 681v7M93 684.500h7M96.500 694v25M62 684.500h24M107 684.500h25" /></g>
                <text x="97" y="641" class="tiny yel" text-anchor="middle">A</text><text x="51.500" y="686.500" class="tiny yel" text-anchor="middle">B</text>
              </svg>
            </div>
            <div class="cell">
              <svg width="164" height="215" viewBox="171 577 164 215" role="img" aria-label="Section mark">
                <path d="M227.500 665.500l18.500 19.500H209z" fill="#f40808" /><circle cx="227" cy="684.500" r="12.300" fill="#212830" stroke="#e00c0c" stroke-width="1.200" />
                <path d="M209 684.500h82" stroke="#e00c0c" stroke-width="1.200" /><path d="M288 673h4.500v12H288z" fill="#f40808" />
                <text x="227.500" y="681.500" class="red" text-anchor="middle">1</text><text x="227.500" y="693" class="red" text-anchor="middle">2</text>
              </svg>
            </div>
            <div class="cell">
              <svg width="164" height="215" viewBox="337 577 164 215" role="img" aria-label="Detail mark">
                <path d="M404.500 700V672.500H422" stroke="#f0f020" fill="none" stroke-width="1.200" /><path d="M403 694h4l-2 8z" fill="#f0f020" />
                <circle cx="430.500" cy="672.500" r="8.800" stroke="#dce020" fill="none" stroke-width="1.200" /><text x="431" y="676" class="tag yel" text-anchor="middle">D1</text>
              </svg>
            </div>
            <div class="cell">
              <svg width="164" height="215" viewBox="503 577 164 215" role="img" aria-label="Level tags">
                ${LEVELS.map((l, i) => {
                  const y = 585.5 + i * 31;
                  const w = i === 6 ? 37 : i ? 32 : 31;
                  return svg`<rect x="563.500" y=${y} width=${w} height="9" stroke="#d81cd8" fill="none" /><text x=${563.5 + w / 2} y=${y + 7} class="lvl" text-anchor="middle">${l}</text>`;
                })}
              </svg>
            </div>
            <div class="cell">
              <svg width="164" height="215" viewBox="669 577 164 215" role="img" aria-label="North arrow">
                <g transform="translate(751.500 684.500)" stroke="#d81014" fill="none" stroke-width="1.200">
                  <circle r="19" stroke-width="2" /><path d="M-28 0h12M16 0h12M0 8v20M-20-20l8 8M20-20l-8 8M-20 20l8-8M20 20l-8-8" />
                  <path d="M0-35L-13 13 0 1z" fill="#d81014" /><path d="M0-35L13 13 0 1z" />
                </g>
                <text x="752.500" y="697" class="mid strong yel" text-anchor="middle">N</text>
              </svg>
            </div>
          </div>
        </section>

        <section>
          ${this.title("Common Drafting Notes")}
          <ul class="frame common">${COMMON.map((n) => html`<li>${n}</li>`)}</ul>
        </section>
      </div>

      <svg class="cross" width="98" height="98" viewBox="0 0 98 98" aria-hidden="true">
        <path d="M0 48.500h42M55 48.500h43M48.500 0v42M48.500 55v43M42.500 42.500h12v12h-12z" stroke="#fff" fill="none" />
      </svg>`;
  }
}

@customElement("cad-command")
class CadCommand extends LitElement {
  static styles = css`
    :host { display: block; }
    .cmd { display: flex; align-items: stretch; height: 54px; border: solid #3b4453; border-width: 4px 0; box-sizing: border-box; background: #2e3541; }
    .tools { display: flex; align-items: center; width: 57px; flex: none; box-sizing: border-box; padding-left: 3px; gap: 8px; }
    .tools button, .hist { padding: 0; border: 0; background: none; display: flex; align-items: center; gap: 3px; }
    .tools .close { padding-right: 3px; }
    .box { display: flex; align-items: center; flex: 1; gap: 6px; padding-left: 4px; margin: 1px 1px 1px 0; background: #fff; border-radius: 2px; }
    .box input { flex: 1; border: 0; outline: 0; padding: 0; background: none; font: italic 12px/16px "DejaVu Sans Mono", monospace; }
    .box input::placeholder { color: #777; opacity: 1; }
    .ico { display: block; }
  `;
  render() {
    return html`<div class="cmd">
      <div class="tools">
        <svg class="ico" width="5" height="18" viewBox="0 0 5 18" aria-hidden="true"><path d="M1 0v18M4 0v18" stroke="#d9dce0" stroke-width="2" stroke-dasharray="2 1" /></svg>
        <button class="close" aria-label="Close">${icon(A.cross, 9)}</button>
        <button aria-label="Customize">${icon(A.wrench)}</button>
      </div>
      <div class="box">
        <button class="hist" aria-label="Recent commands">${icon(A.console, 16, 14)}<svg class="ico" width="8" height="5" viewBox="0 0 8 5"><path d="M0 0h8L4 5z" fill="#555" /></svg></button>
        <input type="text" placeholder="Type a command" aria-label="Command line" />
      </div>
    </div>`;
  }
}

type Cell = [string, boolean, boolean];
const STATUS: Cell[] = [
  ["grid", false, false], ["snap", false, true], ["dyn", true, false], ["ortho", false, false], ["polar", true, true],
  ["iso", false, true], ["track", true, false], ["osnap", true, true], ["weight", false, false], ["transp", false, false],
  ["annoA", true, false], ["annoB", false, false], ["annoC", false, false],
];

@customElement("cad-status")
class CadStatus extends LitElement {
  static styles = [barStyles, css`
    .bar { height: 26px; }
    .tab { padding: 0 8px; }
    .tab + .ico + .tab { padding: 0 7px; }
    .active { padding: 0 16px; margin: 0 -2px 0 0; }
    .bar > .ico { align-self: center; }
    .add { padding: 0 10px; }
    .status { display: flex; gap: 1px; margin-left: auto; padding: 2px 2px 1px 0; }
    .status button { background: #3b4453; justify-content: center; min-width: 24px; }
    .status .on { background: #5b8cc4; }
    .status .car { min-width: 16px; margin-left: -1px; }
    .status .model { width: 47px; margin-right: 1px; }
    .status .scale { gap: 4px; padding: 0 5px 0 3px; }
    .status .gap { margin-right: 1px; }
  `];
  render() {
    const glyph = (n: string) => icon(S[n], 18, 18, 16);
    const cell = ([n, on, drop]: Cell) => html`
      <button class=${on ? "on" : ""} aria-label=${n}>${glyph(n)}</button>
      ${drop ? html`<button class="car" aria-label="${n} options">${caret(true)}</button>` : nothing}`;
    return html`<nav class="bar">
      <button class="menu" aria-label="Menu">${icon(A.menu)}</button>
      <button class="active">Model</button>
      <button class="tab">DWX-TB-A1-L</button>${icon(A.slash, 8, 16)}
      <button class="tab">DWX-TB-A2-L</button>${icon(A.slash, 8, 16)}
      <button class="add" aria-label="New layout">${icon(A.plus, 14)}</button>${icon(A.slash, 8, 16)}
      <div class="status">
        <button class="model">MODEL</button>
        ${STATUS.map(cell)}
        <button class="scale">1:50${caret(true)}</button>
        ${cell(["gear", false, true])}
        <button class="gap" aria-label="Add">${glyph("plus")}</button>
        <button class="gap" aria-label="Isolate">${glyph("shapes")}</button>
        <button class="gap" aria-label="Clean screen">${glyph("expand")}</button>
        <button aria-label="Customization">${glyph("menu")}</button>
      </div>
    </nav>`;
  }
}

@customElement("app-root")
class AppRoot extends LitElement {
  static styles = css`
    :host { display: flex; flex-direction: column; min-height: 100vh; background: #212830; }
    cad-drawing { flex: 1; }
  `;
  render() {
    return html`
      <cad-ribbon></cad-ribbon>
      <cad-file-tabs></cad-file-tabs>
      <cad-drawing></cad-drawing>
      <cad-command></cad-command>
      <cad-status></cad-status>`;
  }
}
